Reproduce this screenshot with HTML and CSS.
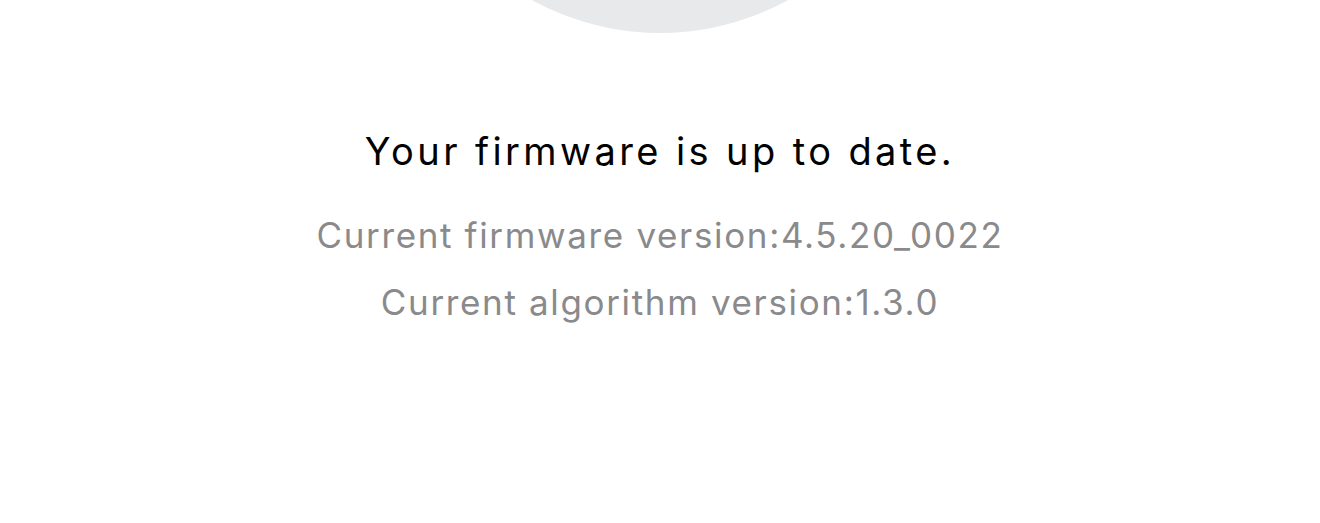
FILE: index.html
```html
<!DOCTYPE html>
<html>
<head>
<meta charset="utf-8">
<link rel="stylesheet" href="styles.css">
</head>
<body>
<div class="page">
  <div class="avatar"></div>
  <h1 class="title">Your firmware is up to date.</h1>
  <p class="info">Current firmware version:4.5.20_0022</p>
  <p class="info">Current algorithm version:1.3.0</p>
</div>
</body>
</html>
```
FILE: styles.css
```css
html, body {
  margin: 0;
  padding: 0;
  background: #ffffff;
  overflow: hidden;
}
.page {
  width: 1320px;
  height: 523px;
  display: flex;
  flex-direction: column;
  align-items: center;
  font-family: Inter, "Noto Sans", "Liberation Sans", Arial, sans-serif;
}
.avatar {
  width: 530px;
  height: 530px;
  border-radius: 50%;
  background: #e8e9eb;
  margin-top: -497px;
  flex-shrink: 0;
}
.title {
  margin: 94px 0 0;
  font-size: 38px;
  font-weight: 400;
  color: #000;
  line-height: 48px;
  letter-spacing: 3.4px;
}
.info {
  margin: 0;
  font-size: 35px;
  color: #8a8a8c;
  line-height: 42px;
  letter-spacing: 1.65px;
}
.title + .info {
  margin-top: 39px;
}
.info + .info {
  margin-top: 25px;
}
```
